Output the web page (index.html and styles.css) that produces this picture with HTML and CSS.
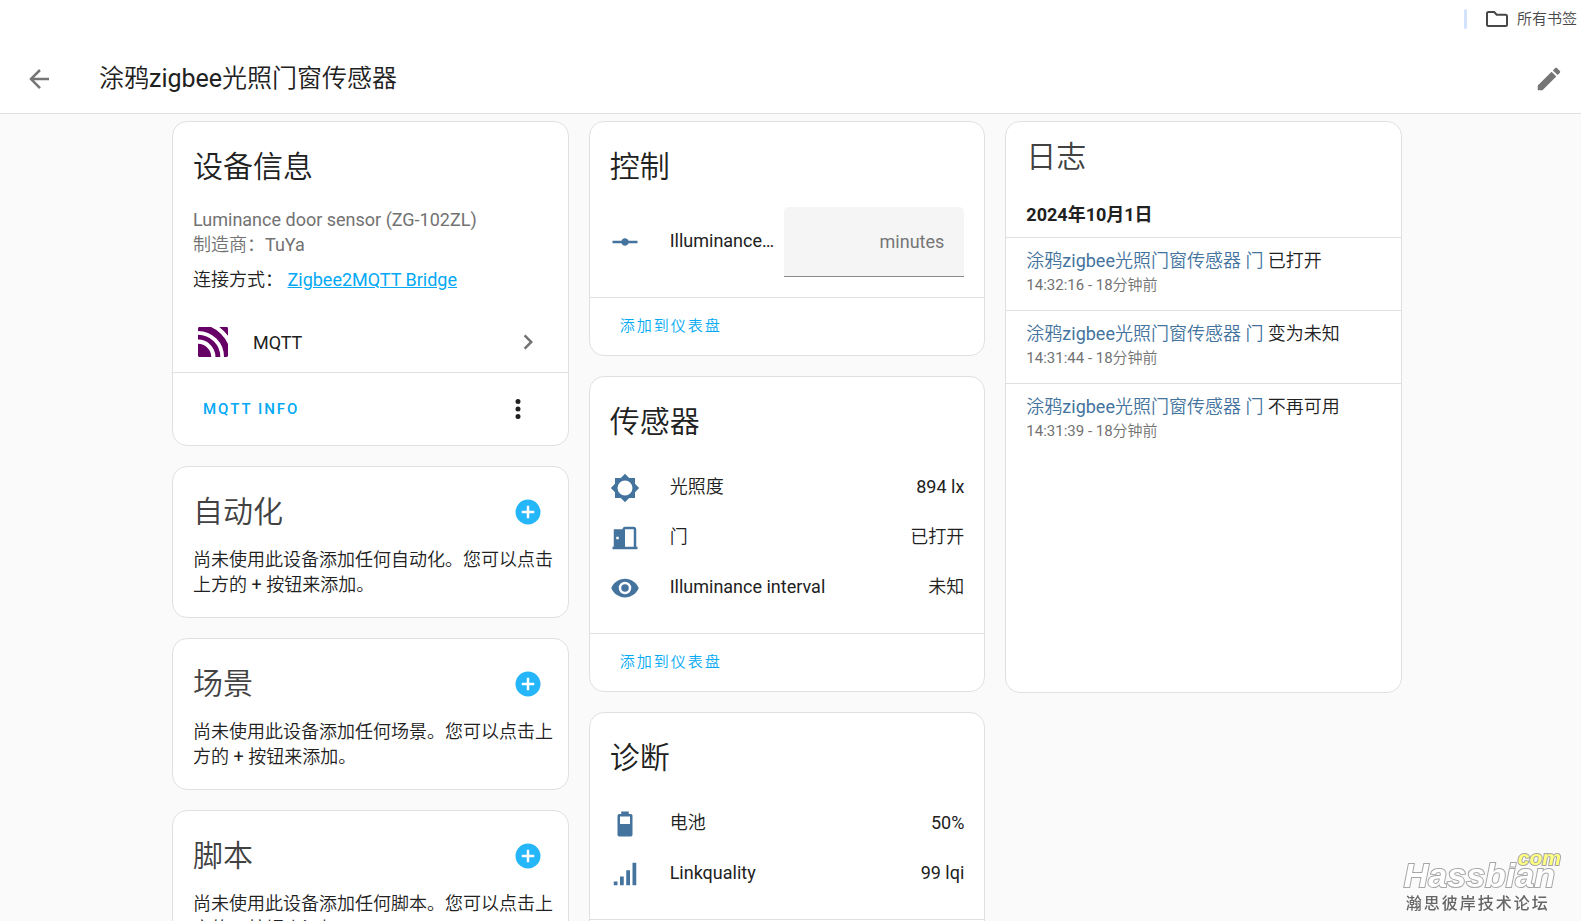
FILE: index.html
```html
<!DOCTYPE html>
<html lang="zh-CN">
<head>
<meta charset="utf-8">
<meta name="viewport" content="width=device-width, initial-scale=1">
<title>涂鸦zigbee光照门窗传感器</title>
<link rel="stylesheet" href="styles.css">
</head>
<body>
<nav class="bookmarks">
  <span class="bookmarks-rule"></span>
  <button class="bookmarks-all" type="button">
    <svg class="folder" viewBox="0 0 22 16" aria-hidden="true"><path d="M2.500 1H8.200L10.700 3.700H19.500Q21 3.700 21 5.200V13.500Q21 15 19.500 15H2.500Q1 15 1 13.500V2.500Q1 1 2.500 1Z"/></svg>
    <span>所有书签</span>
  </button>
</nav>

<header class="toolbar">
  <button class="icon-button muted" type="button" aria-label="返回">
    <svg class="icon" viewBox="0 0 24 24"><path d="M20,11V13H8L13.5,18.5L12.08,19.92L4.16,12L12.08,4.08L13.5,5.5L8,11H20Z"/></svg>
  </button>
  <h1 class="toolbar-title">涂鸦zigbee光照门窗传感器</h1>
  <button class="icon-button muted" type="button" aria-label="编辑">
    <svg class="icon" viewBox="0 0 24 24"><path d="M20.71,7.04C21.1,6.65 21.1,6 20.71,5.63L18.37,3.29C18,2.9 17.35,2.9 16.96,3.29L15.12,5.12L18.87,8.87M3,17.25V21H6.75L17.81,9.93L14.06,6.18L3,17.25Z"/></svg>
  </button>
</header>

<main class="content">
  <div class="columns">
    <div class="column">
      <section class="card">
        <h2 class="card-title">设备信息</h2>
        <div class="card-body">
          <p class="secondary">Luminance door sensor (ZG-102ZL)</p>
          <p class="secondary">制造商：TuYa</p>
          <p class="via">连接方式： <a class="link" href="#bridge">Zigbee2MQTT Bridge</a></p>
        </div>
        <a class="integration" href="#mqtt">
          <svg class="mqtt-logo" viewBox="0 0 86 86" aria-hidden="true">
            <defs><clipPath id="logo-box"><rect width="86" height="86" rx="4"/></clipPath></defs>
            <g clip-path="url(#logo-box)">
              <circle cx="0" cy="86" r="38" fill="#660066"/>
              <circle cx="0" cy="86" r="57" fill="none" stroke="#660066" stroke-width="14"/>
              <circle cx="0" cy="86" r="84" fill="none" stroke="#660066" stroke-width="19"/>
              <path d="M61 0H86V25Q75 11 61 0Z" fill="#660066"/>
            </g>
          </svg>
          <span class="integration-name">MQTT</span>
          <svg class="icon chevron" viewBox="0 0 24 24" aria-hidden="true"><path d="M8.59,16.58L13.17,12L8.59,7.41L10,6L16,12L10,18L8.59,16.58Z"/></svg>
        </a>
        <div class="card-actions tall">
          <button class="text-button" type="button">MQTT INFO</button>
          <button class="icon-button dark" type="button" aria-label="更多">
            <svg class="icon" viewBox="0 0 24 24"><path d="M12,16A2,2 0 0,1 14,18A2,2 0 0,1 12,20A2,2 0 0,1 10,18A2,2 0 0,1 12,16M12,10A2,2 0 0,1 14,12A2,2 0 0,1 12,14A2,2 0 0,1 10,12A2,2 0 0,1 12,10M12,4A2,2 0 0,1 14,6A2,2 0 0,1 12,8A2,2 0 0,1 10,6A2,2 0 0,1 12,4Z"/></svg>
          </button>
        </div>
      </section>

      <section class="card">
        <div class="card-header">
          <h2 class="heading">自动化</h2>
          <button class="icon-button add" type="button" aria-label="添加自动化">
            <svg class="icon" viewBox="0 0 24 24"><path d="M17,13H13V17H11V13H7V11H11V7H13V11H17M12,2A10,10 0 0,0 2,12A10,10 0 0,0 12,22A10,10 0 0,0 22,12A10,10 0 0,0 12,2Z"/></svg>
          </button>
        </div>
        <p class="hint">尚未使用此设备添加任何自动化。您可以点击上方的 + 按钮来添加。</p>
      </section>

      <section class="card">
        <div class="card-header">
          <h2 class="heading">场景</h2>
          <button class="icon-button add" type="button" aria-label="添加场景">
            <svg class="icon" viewBox="0 0 24 24"><path d="M17,13H13V17H11V13H7V11H11V7H13V11H17M12,2A10,10 0 0,0 2,12A10,10 0 0,0 12,22A10,10 0 0,0 22,12A10,10 0 0,0 12,2Z"/></svg>
          </button>
        </div>
        <p class="hint">尚未使用此设备添加任何场景。您可以点击上方的 + 按钮来添加。</p>
      </section>

      <section class="card">
        <div class="card-header">
          <h2 class="heading">脚本</h2>
          <button class="icon-button add" type="button" aria-label="添加脚本">
            <svg class="icon" viewBox="0 0 24 24"><path d="M17,13H13V17H11V13H7V11H11V7H13V11H17M12,2A10,10 0 0,0 2,12A10,10 0 0,0 12,22A10,10 0 0,0 22,12A10,10 0 0,0 12,2Z"/></svg>
          </button>
        </div>
        <p class="hint">尚未使用此设备添加任何脚本。您可以点击上方的 + 按钮来添加。</p>
      </section>
    </div>

    <div class="column">
      <section class="card">
        <h2 class="card-title">控制</h2>
        <div class="rows">
          <div class="row control">
            <svg class="icon state" viewBox="0 0 24 24" aria-hidden="true"><path d="M2,11H9.17C9.58,9.83 10.69,9 12,9C13.31,9 14.42,9.83 14.83,11H22V13H14.83C14.42,14.17 13.31,15 12,15C10.69,15 9.58,14.17 9.17,13H2V11Z"/></svg>
            <label class="row-name" for="interval">Illuminance interval</label>
            <div class="field">
              <input class="field-input" id="interval" type="text" inputmode="numeric">
              <span class="field-unit">minutes</span>
            </div>
          </div>
        </div>
        <div class="card-actions">
          <button class="text-button" type="button">添加到仪表盘</button>
        </div>
      </section>

      <section class="card">
        <h2 class="card-title">传感器</h2>
        <div class="rows">
          <div class="row">
            <svg class="icon state" viewBox="0 0 24 24" aria-hidden="true"><path d="M12,18A6,6 0 0,1 6,12A6,6 0 0,1 12,6A6,6 0 0,1 18,12A6,6 0 0,1 12,18M20,15.31L23.31,12L20,8.69V4H15.31L12,0.69L8.69,4H4V8.69L0.69,12L4,15.31V20H8.69L12,23.31L15.31,20H20V15.31Z"/></svg>
            <span class="row-name">光照度</span>
            <span class="row-value">894 lx</span>
          </div>
          <div class="row">
            <svg class="icon state" viewBox="0 0 24 24" aria-hidden="true"><path d="M12,3C10.89,3 10,3.89 10,5H3V19H2V21H22V19H21V5C21,3.89 20.11,3 19,3H12M12,5H19V19H12V5M5,11H7V13H5V11Z"/></svg>
            <span class="row-name">门</span>
            <span class="row-value">已打开</span>
          </div>
          <div class="row">
            <svg class="icon state" viewBox="0 0 24 24" aria-hidden="true"><path d="M12,9A3,3 0 0,0 9,12A3,3 0 0,0 12,15A3,3 0 0,0 15,12A3,3 0 0,0 12,9M12,17A5,5 0 0,1 7,12A5,5 0 0,1 12,7A5,5 0 0,1 17,12A5,5 0 0,1 12,17M12,4.5C7,4.5 2.73,7.61 1,12C2.73,16.39 7,19.5 12,19.5C17,19.5 21.27,16.39 23,12C21.27,7.61 17,4.5 12,4.5Z"/></svg>
            <span class="row-name">Illuminance interval</span>
            <span class="row-value">未知</span>
          </div>
        </div>
        <div class="card-actions">
          <button class="text-button" type="button">添加到仪表盘</button>
        </div>
      </section>

      <section class="card">
        <h2 class="card-title">诊断</h2>
        <div class="rows">
          <div class="row">
            <svg class="icon state" viewBox="0 0 24 24" aria-hidden="true"><path d="M16,12H8V6H16M16.67,4H15V2H9V4H7.33A1.33,1.33 0 0,0 6,5.33V20.67C6,21.4 6.6,22 7.33,22H16.67A1.33,1.33 0 0,0 18,20.67V5.33C18,4.6 17.4,4 16.67,4Z"/></svg>
            <span class="row-name">电池</span>
            <span class="row-value">50%</span>
          </div>
          <div class="row">
            <svg class="icon state" viewBox="0 0 24 24" aria-hidden="true"><path d="M3,21H6V18H3M8,21H11V14H8M13,21H16V9H13M18,21H21V3H18V21Z"/></svg>
            <span class="row-name">Linkquality</span>
            <span class="row-value">99 lqi</span>
          </div>
        </div>
        <div class="card-actions"></div>
      </section>
    </div>

    <div class="column">
      <section class="card logbook">
        <h2 class="heading log-title">日志</h2>
        <h3 class="log-date">2024年10月1日</h3>
        <ul class="log">
          <li class="log-entry">
            <p><a class="entity" href="#door">涂鸦zigbee光照门窗传感器 门</a> 已打开</p>
            <p class="log-time">14:32:16 - 18分钟前</p>
          </li>
          <li class="log-entry">
            <p><a class="entity" href="#door">涂鸦zigbee光照门窗传感器 门</a> 变为未知</p>
            <p class="log-time">14:31:44 - 18分钟前</p>
          </li>
          <li class="log-entry">
            <p><a class="entity" href="#door">涂鸦zigbee光照门窗传感器 门</a> 不再可用</p>
            <p class="log-time">14:31:39 - 18分钟前</p>
          </li>
        </ul>
      </section>
    </div>
  </div>
</main>

<aside class="watermark">
  <span class="watermark-com">com</span>
  <span class="watermark-name">Hassbian</span>
  <span class="watermark-forum">瀚思彼岸技术论坛</span>
</aside>
</body>
</html>
```
FILE: styles.css
```css
* {
  box-sizing: border-box;
}

body {
  margin: 0;
  height: 100vh;
  overflow: hidden;
  background: #fafafa;
  color: #212121;
  font-family: Roboto, "Noto Sans CJK SC DemiLight", "Noto Sans CJK SC", sans-serif;
  font-size: 18px;
  line-height: 25px;
}

h1, h2, h3, p, ul {
  margin: 0;
  padding: 0;
  font-weight: 400;
}

button {
  border: 0;
  padding: 0;
  background: none;
  color: inherit;
  font: inherit;
  cursor: pointer;
}

.bookmarks {
  display: flex;
  justify-content: flex-end;
  align-items: center;
  gap: 19px;
  height: 44px;
  padding: 0 4px 6px 0;
  background: #fff;
}

.bookmarks-rule {
  width: 3px;
  height: 20px;
  border-radius: 2px;
  background: #d3e3fd;
}

.bookmarks-all {
  display: flex;
  align-items: center;
  gap: 9px;
  color: #474747;
  font-size: 15px;
}

.folder {
  width: 22px;
  height: 16px;
  fill: none;
  stroke: #474747;
  stroke-width: 2;
}

.toolbar {
  display: flex;
  align-items: center;
  height: 70px;
  padding: 0 12px 0 19px;
  border-bottom: 1px solid #e0e0e0;
  background: #fff;
}

.toolbar-title {
  flex: 1;
  margin-left: 40px;
  font-size: 25px;
  line-height: 30px;
}

.icon-button {
  display: flex;
  align-items: center;
  justify-content: center;
  width: 40px;
  height: 40px;
}

.icon {
  flex: none;
  width: 30px;
  height: 30px;
  fill: currentColor;
}

.muted {
  color: #757575;
}

.dark {
  color: #212121;
}

.add {
  color: #25b5f9;
}

.content {
  padding: 7px 28px 0 21px;
}

.columns {
  display: grid;
  grid-template-columns: repeat(3, minmax(0, 1fr));
  gap: 20px;
  max-width: 1230px;
  margin: 0 auto;
}

.column {
  display: flex;
  flex-direction: column;
  gap: 20px;
}

.card {
  border: 1px solid #e0e0e0;
  border-radius: 15px;
  background: #fff;
}

.card-title {
  padding: 15px 20px 10px;
  font-size: 30px;
  line-height: 60px;
}

.card-body {
  padding: 0 20px 20px;
}

.secondary {
  color: #727272;
}

.via {
  margin-top: 10px;
}

.link {
  color: #03a9f4;
}

.integration {
  display: flex;
  align-items: center;
  height: 60px;
  padding: 0 25px;
  color: inherit;
  text-decoration: none;
}

.mqtt-logo {
  width: 30px;
  height: 30px;
}

.integration-name {
  flex: 1;
  margin-left: 25px;
}

.chevron {
  color: #727272;
}

.card-actions {
  display: flex;
  align-items: center;
  justify-content: space-between;
  height: 58px;
  padding: 0 30px 0 20px;
  border-top: 1px solid #e0e0e0;
}

.tall {
  height: 73px;
}

.text-button {
  height: 45px;
  padding: 0 10px;
  color: #03a9f4;
  font-size: 15px;
  font-weight: 500;
  letter-spacing: 2px;
}

.card-header {
  display: flex;
  align-items: center;
  justify-content: space-between;
  padding: 15px 20px 5px;
}

.heading {
  color: #424242;
  font-size: 30px;
  line-height: 60px;
}

.hint {
  padding: 0 12px 20px 20px;
}

.rows {
  padding: 0 20px 20px;
}

.row {
  display: flex;
  align-items: center;
  height: 50px;
}

.row:not(.control):first-child {
  margin-top: 1px;
}

.control {
  height: 70px;
}

.state {
  color: #44739e;
}

.row-name,
.row-value {
  padding-bottom: 3px;
}

.row-name {
  flex: 1;
  margin: 0 10px 0 30px;
  overflow: hidden;
  text-overflow: ellipsis;
  white-space: nowrap;
}

.field {
  display: flex;
  align-items: center;
  width: 180px;
  height: 70px;
  padding: 0 20px;
  border-bottom: 1px solid #8a8a8a;
  border-radius: 5px 5px 0 0;
  background: #f5f5f5;
}

.field-input {
  flex: 1;
  min-width: 0;
  border: 0;
  outline: 0;
  padding: 0;
  background: none;
  color: inherit;
  font: inherit;
}

.field-unit {
  color: #757575;
}

.logbook {
  height: 572px;
}

.log-title {
  padding: 5px 20px 0;
}

.log-date {
  padding: 15px 20px 10px;
  font-family: Roboto, "Noto Sans CJK SC", sans-serif;
  font-size: 18px;
  font-weight: 700;
}

.log {
  list-style: none;
}

.log-entry {
  height: 73px;
  padding: 10px 20px;
  border-top: 1px solid #e0e0e0;
}

.entity {
  color: #44739e;
  text-decoration: none;
}

.log-time {
  color: #727272;
  font-size: 15px;
}

.watermark {
  position: fixed;
  right: 20px;
  bottom: 5px;
  display: flex;
  flex-direction: column;
}

.watermark-com,
.watermark-name {
  font-family: "Liberation Sans", Arial, sans-serif;
  font-style: italic;
  font-weight: 700;
  paint-order: stroke fill;
  -webkit-text-stroke: 2px #a6a6a6;
}

.watermark-com {
  align-self: flex-end;
  color: #ffff80;
  font-size: 21px;
  line-height: 8px;
}

.watermark-name {
  padding-right: 6px;
  color: #fff;
  font-size: 34px;
  line-height: 26px;
}

.watermark-forum {
  padding-left: 2px;
  color: #666;
  font-family: "Noto Sans CJK SC", sans-serif;
  font-size: 16px;
  font-weight: 500;
  line-height: 28px;
  letter-spacing: 2px;
}
```
